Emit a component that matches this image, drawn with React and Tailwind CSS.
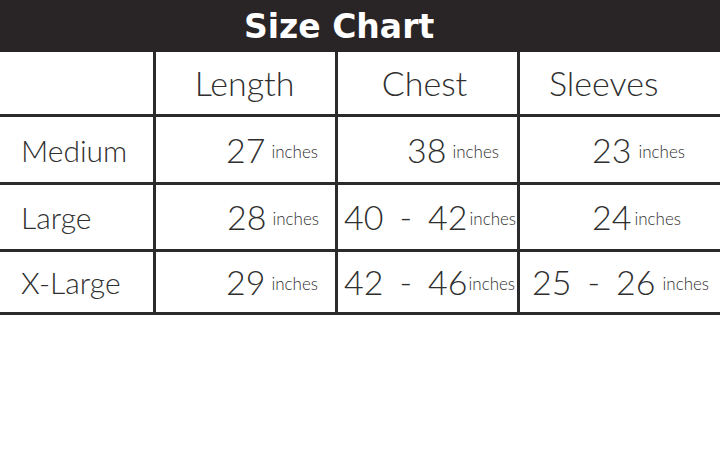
import React from "react";

const F = { fontFamily: "Lato, 'Open Sans', sans-serif" };

function Num({ n, gap = "ml-[6px]" }) {
  return (
    <>
      <span className="text-[34px] leading-none">{n}</span>
      <span className={`text-[17px] leading-none -translate-y-[5px] ${gap}`}>inches</span>
    </>
  );
}

function Range({ a, b, gap }) {
  return (
    <>
      <span className="text-[34px] leading-none">{a}</span>
      <span className="text-[34px] leading-none mx-[16px]">-</span>
      <span className="text-[34px] leading-none">{b}</span>
      <span className={`text-[17px] leading-none -translate-y-[5px] ${gap}`}>inches</span>
    </>
  );
}

export default function App() {
  const cell = "flex items-baseline border-l-[3px] border-[#2b2b2b]";
  const row = "grid grid-cols-[153px_182px_182px_203px] border-b-[3px] border-[#2b2b2b]";
  const label = "flex items-center pl-[21px] text-[30px] leading-none";
  return (
    <div className="w-[720px] h-[451px] bg-white text-[#2f2f2f] font-light overflow-hidden" style={F}>
      <div className="h-[52px] bg-[#292526] flex items-center pl-[244px]">
        <span
          className="text-white text-[33px] font-bold leading-none"
          style={{ fontFamily: "'DejaVu Sans', sans-serif" }}
        >
          Size Chart
        </span>
      </div>

      <div className={`${row} h-[65px]`}>
        <div />
        <div className={`${cell} items-center justify-center`}>
          <span className="text-[34px] leading-none -translate-x-[1px]">Length</span>
        </div>
        <div className={`${cell} items-center justify-center`}>
          <span className="text-[34px] leading-none -translate-x-[3px]">Chest</span>
        </div>
        <div className={`${cell} items-center pl-[29px]`}>
          <span className="text-[34px] leading-none">Sleeves</span>
        </div>
      </div>

      <div className={`${row} h-[68px]`}>
        <div className={label}>Medium</div>
        <div className={`${cell} items-center justify-end pr-[17px]`}>
          <div className="flex items-baseline"><Num n="27" /></div>
        </div>
        <div className={`${cell} items-center justify-end pr-[18px]`}>
          <div className="flex items-baseline"><Num n="38" /></div>
        </div>
        <div className={`${cell} items-center pl-[72px]`}>
          <div className="flex items-baseline"><Num n="23" gap="ml-[7px]" /></div>
        </div>
      </div>

      <div className={`${row} h-[67px]`}>
        <div className={label}>Large</div>
        <div className={`${cell} items-center justify-end pr-[16px]`}>
          <div className="flex items-baseline"><Num n="28" /></div>
        </div>
        <div className={`${cell} items-center pl-[6px]`}>
          <div className="flex items-baseline"><Range a="40" b="42" gap="ml-[2px]" /></div>
        </div>
        <div className={`${cell} items-center pl-[72px]`}>
          <div className="flex items-baseline"><Num n="24" gap="ml-[3px]" /></div>
        </div>
      </div>

      <div className={`${row} h-[63px]`}>
        <div className={label}>X-Large</div>
        <div className={`${cell} items-center justify-end pr-[17px]`}>
          <div className="flex items-baseline"><Num n="29" /></div>
        </div>
        <div className={`${cell} items-center pl-[6px]`}>
          <div className="flex items-baseline"><Range a="42" b="46" gap="ml-[1px]" /></div>
        </div>
        <div className={`${cell} items-center pl-[12px]`}>
          <div className="flex items-baseline"><Range a="25" b="26" gap="ml-[7px]" /></div>
        </div>
      </div>
    </div>
  );
}
